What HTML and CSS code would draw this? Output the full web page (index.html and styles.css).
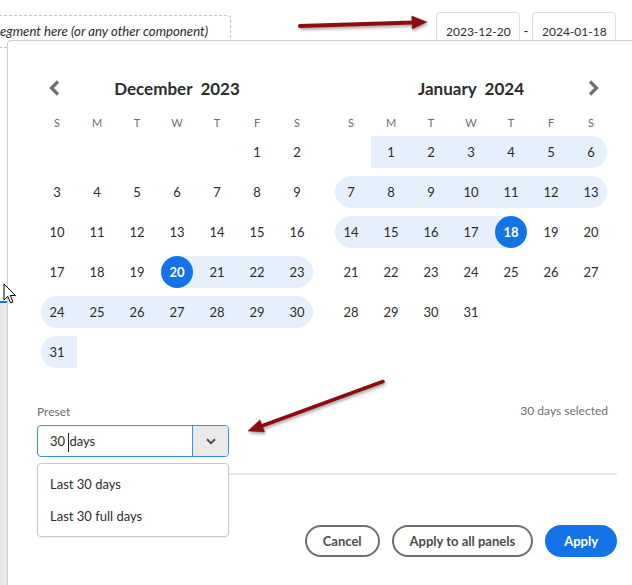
FILE: index.html
```
<!DOCTYPE html>
<html>
<head>
<meta charset="utf-8">
<link rel="stylesheet" href="styles.css">
</head>
<body>
<div class="top">
  <div class="dropzone">egment here (or any other component)</div>
  <div class="dates">
    <div class="date">2023-12-20</div>
    <span class="dash">-</span>
    <div class="date">2024-01-18</div>
  </div>
</div>
<div class="main">
  <div class="side"><div class="side-panel"></div></div>
  <div class="pop">
    <div class="cals">
      <div class="month">
        <div class="mhead">
          <div class="nav"><svg width="14" height="18" viewBox="0 0 14 18"><path d="M11 2.5 L4.5 9 L11 15.5" fill="none" stroke="#6e6e6e" stroke-width="3.2"/></svg></div>
          <div class="mtitle">December&nbsp; 2023</div>
          <div></div>
        </div>
        <div class="wk"><span>S</span><span>M</span><span>T</span><span>W</span><span>T</span><span>F</span><span>S</span></div>
        <div class="days">
          <span></span><span></span><span></span><span></span><span></span><span class="d">1</span><span class="d">2</span>
          <span class="d">3</span><span class="d">4</span><span class="d">5</span><span class="d">6</span><span class="d">7</span><span class="d">8</span><span class="d">9</span>
          <span class="d">10</span><span class="d">11</span><span class="d">12</span><span class="d">13</span><span class="d">14</span><span class="d">15</span><span class="d">16</span>
          <span class="d">17</span><span class="d">18</span><span class="d">19</span><span class="d hr sel">20</span><span class="d r">21</span><span class="d r">22</span><span class="d rr">23</span>
          <span class="d rl">24</span><span class="d r">25</span><span class="d r">26</span><span class="d r">27</span><span class="d r">28</span><span class="d r">29</span><span class="d rr">30</span>
          <span class="d rl">31</span>
        </div>
      </div>
      <div class="month">
        <div class="mhead">
          <div></div>
          <div class="mtitle">January&nbsp; 2024</div>
          <div class="nav"><svg width="14" height="18" viewBox="0 0 14 18"><path d="M3 2.5 L9.5 9 L3 15.5" fill="none" stroke="#6e6e6e" stroke-width="3.2"/></svg></div>
        </div>
        <div class="wk"><span>S</span><span>M</span><span>T</span><span>W</span><span>T</span><span>F</span><span>S</span></div>
        <div class="days">
          <span></span><span class="d r">1</span><span class="d r">2</span><span class="d r">3</span><span class="d r">4</span><span class="d r">5</span><span class="d rr">6</span>
          <span class="d rl">7</span><span class="d r">8</span><span class="d r">9</span><span class="d r">10</span><span class="d r">11</span><span class="d r">12</span><span class="d rr">13</span>
          <span class="d rl">14</span><span class="d r">15</span><span class="d r">16</span><span class="d r">17</span><span class="d hl sel">18</span><span class="d">19</span><span class="d">20</span>
          <span class="d">21</span><span class="d">22</span><span class="d">23</span><span class="d">24</span><span class="d">25</span><span class="d">26</span><span class="d">27</span>
          <span class="d">28</span><span class="d">29</span><span class="d">30</span><span class="d">31</span>
        </div>
      </div>
    </div>
    <div class="foot">
      <div class="preset-row">
        <div>
          <div class="label">Preset</div>
          <div class="combo-wrap">
            <div class="combo">
              <div class="combo-input">30 <span class="caret"></span>days</div>
              <div class="combo-btn"><svg width="10" height="7" viewBox="0 0 10 7"><path d="M1 1.2 L5 5.2 L9 1.2" fill="none" stroke="#4b4b4b" stroke-width="2"/></svg></div>
            </div>
            <div class="menu">
              <div class="item">Last 30 days</div>
              <div class="item">Last 30 full days</div>
            </div>
          </div>
        </div>
        <div class="count">30 days selected</div>
      </div>
      <div class="divider"></div>
      <div class="actions">
        <div class="btn">Cancel</div>
        <div class="btn">Apply to all panels</div>
        <div class="btn primary">Apply</div>
      </div>
    </div>
  </div>
</div>
<svg class="cursor" width="14" height="22" viewBox="0 0 14 22"><path d="M1 1 L1 17 L4.8 13.4 L7.6 19.8 L10 18.8 L7.3 12.5 L12.4 12.5 Z" fill="#fff" stroke="#000" stroke-width="1" stroke-linejoin="round"/></svg>
<svg class="arrows" width="632" height="585" viewBox="0 0 632 585">
  <defs><filter id="sh" x="-10%" y="-50%" width="120%" height="200%"><feDropShadow dx="1" dy="2" stdDeviation="1.5" flood-color="#000" flood-opacity="0.35"/></filter></defs>
  <g filter="url(#sh)" fill="#8c1010" stroke="#8c1010">
    <line x1="300" y1="26" x2="414" y2="22.6" stroke-width="4" stroke-linecap="round"/>
    <polygon points="427,22 411.8,16 412.2,29" stroke-width="0.5"/>
    <line x1="383" y1="381.5" x2="263" y2="425.5" stroke-width="3.5" stroke-linecap="round"/>
    <polygon points="248,431 260,419.8 264.6,432" stroke-width="0.5"/>
  </g>
</svg>
</body>
</html>
```
FILE: styles.css
```
html, body {
  margin: 0;
  padding: 0;
}
body {
  width: 632px;
  height: 585px;
  overflow: hidden;
  position: relative;
  background: #fff;
  font-family: Lato, "Open Sans", sans-serif;
  color: #2c2c2c;
}
.top {
  display: flex;
  justify-content: space-between;
  align-items: flex-start;
  height: 40px;
  padding-right: 16px;
}
.dropzone {
  margin: 15px 0 0 -10px;
  width: 241px;
  height: 33px;
  box-sizing: border-box;
  border: 1px dashed #c4c4c4;
  border-radius: 4px;
  padding-left: 9px;
  font-style: italic;
  font-size: 13.2px;
  line-height: 31px;
  color: #2c2c2c;
  white-space: nowrap;
  overflow: hidden;
}
.dates {
  display: flex;
  align-items: flex-start;
  margin-top: 12px;
}
.date {
  width: 84px;
  height: 40px;
  box-sizing: border-box;
  border: 1px solid #dcdcdc;
  border-radius: 4px;
  padding-left: 9px;
  font-size: 12px;
  line-height: 37px;
  color: #2c2c2c;
}
.dash {
  width: 12px;
  text-align: center;
  font-size: 13px;
  line-height: 39px;
}
.main {
  display: flex;
  height: 545px;
}
.side {
  width: 7px;
  display: flex;
  flex-direction: column;
  justify-content: flex-end;
}
.side-panel {
  height: 284px;
  box-sizing: border-box;
  background: #e9e9e9;
  border-top: 2px solid #1473e6;
}
.pop {
  flex: 1;
  position: relative;
  z-index: 1;
  background: #fff;
  border-top: 1px solid #cfcfcf;
  border-left: 1px solid #cfcfcf;
  border-top-left-radius: 4px;
  padding: 31px 0 0 29px;
}
.cals {
  display: flex;
  gap: 14px;
}
.month {
  width: 280px;
}
.mhead {
  display: grid;
  grid-template-columns: 34px 1fr 34px;
  align-items: center;
  height: 32px;
}
.nav {
  display: flex;
  justify-content: center;
  align-items: center;
}
.mtitle {
  text-align: center;
  font-weight: 700;
  font-size: 17px;
  color: #2c2c2c;
}
.wk {
  display: grid;
  grid-template-columns: repeat(7, 40px);
  margin-top: 8px;
  height: 20px;
  align-items: center;
  text-align: center;
  font-size: 11px;
  color: #6e6e6e;
}
.days {
  display: grid;
  grid-template-columns: repeat(7, 40px);
  grid-auto-rows: 40px;
  font-size: 13px;
  color: #2c2c2c;
}
.d {
  position: relative;
  z-index: 0;
  display: flex;
  align-items: center;
  justify-content: center;
}
.r::before, .rl::before, .rr::before, .hl::before, .hr::before {
  content: '';
  position: absolute;
  top: 4px;
  bottom: 4px;
  left: 0;
  right: 0;
  background: #e6f0fc;
  z-index: -1;
}
.rl::before {
  left: 4px;
  border-radius: 16px 0 0 16px;
}
.rr::before {
  right: 4px;
  border-radius: 0 16px 16px 0;
}
.hr::before {
  left: 50%;
}
.hl::before {
  right: 50%;
}
.sel {
  color: #fff;
  font-weight: 700;
}
.sel::after {
  content: '';
  position: absolute;
  top: 4px;
  left: 4px;
  width: 32px;
  height: 32px;
  border-radius: 50%;
  background: #1473e6;
  z-index: -1;
}
.foot {
  width: 580px;
  margin-top: 32px;
}
.preset-row {
  display: flex;
  justify-content: space-between;
  align-items: flex-start;
}
.label {
  font-size: 12px;
  line-height: 16px;
  color: #6e6e6e;
  margin-bottom: 5px;
}
.count {
  font-size: 12px;
  line-height: 14px;
  color: #6e6e6e;
  padding-right: 9px;
}
.combo-wrap {
  position: relative;
  width: 192px;
}
.combo {
  display: flex;
  height: 32px;
  box-sizing: border-box;
  border: 1px solid #378ef0;
  border-radius: 4px;
  overflow: hidden;
}
.combo-input {
  flex: 1;
  padding-left: 12px;
  font-size: 13px;
  line-height: 30px;
  color: #2c2c2c;
  white-space: pre;
}
.caret {
  display: inline-block;
  width: 1px;
  height: 19px;
  background: #222;
  vertical-align: middle;
}
.combo-btn {
  width: 35px;
  background: #e9e9e9;
  border-left: 1px solid #378ef0;
  display: flex;
  align-items: center;
  justify-content: center;
}
.menu {
  position: absolute;
  top: 38px;
  left: 0;
  width: 192px;
  box-sizing: border-box;
  border: 1px solid #cacaca;
  border-radius: 4px;
  background: #fff;
  padding: 4px 0;
  box-shadow: 0 1px 3px rgba(0, 0, 0, 0.08);
  z-index: 2;
}
.item {
  height: 32px;
  line-height: 32px;
  padding-left: 12px;
  font-size: 13px;
  color: #2c2c2c;
}
.divider {
  height: 2px;
  background: #e8e8e8;
  margin-top: 16px;
}
.actions {
  display: flex;
  justify-content: flex-end;
  gap: 12px;
  margin-top: 50px;
}
.btn {
  height: 32px;
  box-sizing: border-box;
  border: 2px solid #6e6e6e;
  border-radius: 16px;
  padding: 0 16px;
  display: flex;
  align-items: center;
  font-weight: 700;
  font-size: 13px;
  color: #4b4b4b;
  background: #fff;
}
.btn.primary {
  background: #1473e6;
  border-color: #1473e6;
  color: #fff;
  padding: 0 17px;
}
.cursor {
  position: absolute;
  left: 3px;
  top: 283px;
  z-index: 5;
}
.arrows {
  position: absolute;
  left: 0;
  top: 0;
  z-index: 10;
  pointer-events: none;
}
```
